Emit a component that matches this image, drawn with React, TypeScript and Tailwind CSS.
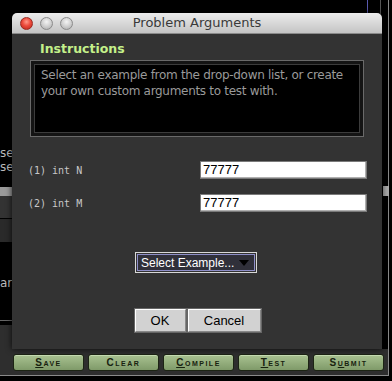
import React from "react";

const sans = { fontFamily: '"DejaVu Sans", "Noto Sans", sans-serif' };
const arial = { fontFamily: '"Liberation Sans", Arial, sans-serif' };
const mono = { fontFamily: '"DejaVu Sans Mono", "Liberation Mono", monospace' };

function Light({ red }: { red?: boolean }) {
  return (
    <div
      className={
        red
          ? "w-[13px] h-[13px] rounded-full border border-[#9a2a22] bg-[radial-gradient(circle_at_50%_35%,#ff9a8a_0%,#ec4b3c_45%,#b8261a_100%)]"
          : "w-[13px] h-[13px] rounded-full border border-[#8a8a8a] bg-[radial-gradient(circle_at_50%_35%,#f4f4f4_0%,#d0d0d0_50%,#a8a8a8_100%)]"
      }
    />
  );
}

function ToolButton({ label, u }: { label: string; u: number }) {
  return (
    <div className="flex-1 h-[17px] rounded-[3px] border border-[#1c2414] bg-[linear-gradient(#a9c291,#7f9a69)] shadow-[inset_0_1px_0_#c7dcb3] flex items-center justify-center">
      <span
        className="text-[10px] font-bold tracking-[1.5px] text-[#18220f] leading-none"
        style={{ ...arial, fontVariant: "small-caps" }}
      >
        {label.split("").map((c, i) => (
          <span key={i} className={i === u ? "underline" : ""}>
            {i === 0 ? c.toUpperCase() : c.toLowerCase()}
          </span>
        ))}
      </span>
    </div>
  );
}

export default function App() {
  return (
    <div className="relative w-[392px] h-[381px] bg-black overflow-hidden" style={sans}>
      {/* background app fragments */}
      <div className="absolute left-[367px] top-0 w-px h-[14px] bg-[#5a5ab0]" />
      <div className="absolute left-[380px] top-0 w-px h-[14px] bg-[#555]" />
      <div className="absolute left-[388px] top-0 w-px h-[376px] bg-[#8a8a8a]" />
      <div className="absolute left-[383px] top-[186px] w-[6px] h-[10px] bg-[#aaa]" />
      <div className="absolute left-0 top-[146px] text-[12px] leading-[14px] text-[#bbb]">
        <div>se</div>
        <div>ser</div>
      </div>
      <div className="absolute left-0 top-[187px] w-[14px] h-[9px] bg-[#9a9a9a]" />
      <div className="absolute left-0 top-[196px] w-[14px] h-[22px] bg-[#333]" />
      <div className="absolute left-0 top-[219px] w-[14px] h-[23px] bg-[#2a2a2a]" />
      <div className="absolute left-0 top-[276px] text-[12px] leading-[14px] text-[#bbb]">are</div>
      <div className="absolute left-0 top-[320px] w-[14px] h-px bg-[#666]" />
      <div className="absolute left-0 top-[325px] w-[14px] h-[24px] bg-[#2e2e2e]" />

      {/* bottom toolbar */}
      <div className="absolute left-0 top-[349px] w-[388px] h-[27px] bg-[#2e2e2e] border-b border-[#8a8a8a] flex items-center gap-[4px] pl-[13px] pr-[4px] pt-[1px]">
        <ToolButton label="Save" u={0} />
        <ToolButton label="Clear" u={-1} />
        <ToolButton label="Compile" u={0} />
        <ToolButton label="Test" u={0} />
        <ToolButton label="Submit" u={1} />
      </div>

      {/* dialog */}
      <div className="absolute left-[12px] top-[13px] w-[370px] h-[336px] flex flex-col rounded-t-[5px] overflow-hidden shadow-[0_0_6px_rgba(0,0,0,0.8)]">
        <div className="h-[21px] bg-[linear-gradient(#ececec,#c4c4c4)] border-b border-[#8a8a8a] flex items-center relative px-[8px] gap-[7px]">
          <Light red />
          <Light />
          <Light />
          <div className="absolute inset-0 flex items-center justify-center text-[13px] text-[#3a3a3a]">
            Problem Arguments
          </div>
        </div>
        <div className="flex-1 bg-[#333333] flex flex-col px-[18px]">
          <div className="pl-[10px] pt-[7px] text-[12.5px] font-bold text-[#c4f08a] leading-[15px]">
            Instructions
          </div>
          <div className="mt-[4px] h-[77px] border border-[#6a6a6a] bg-[#141414] p-[3px]">
            <div className="h-full bg-black border border-[#3c3c3c] px-[6px] pt-[2px] text-[12px] tracking-[-0.3px] leading-[16px] text-[#9a9a9a] whitespace-nowrap">
              Select an example from the drop-down list, or create
              <br />
              your own custom arguments to test with.
            </div>
          </div>
          <div className="mt-[24px] flex items-center justify-between">
            <span className="text-[10px] text-[#c8c8c8] -ml-[2px]" style={mono}>
              (1) int N
            </span>
            <div className="w-[167px] h-[18px] bg-white border border-[#7a7a7a] shadow-[inset_-1px_-1px_0_#b0b0b0] flex items-center px-[2px] text-[13px] text-black -mr-[3px]" style={arial}>
              77777
            </div>
          </div>
          <div className="mt-[15px] flex items-center justify-between">
            <span className="text-[10px] text-[#c8c8c8] -ml-[2px]" style={mono}>
              (2) int M
            </span>
            <div className="w-[167px] h-[18px] bg-white border border-[#7a7a7a] shadow-[inset_-1px_-1px_0_#b0b0b0] flex items-center px-[2px] text-[13px] text-black -mr-[3px]" style={arial}>
              77777
            </div>
          </div>
          <div className="mt-[40px] flex justify-center pr-[2px]">
            <div className="w-[122px] h-[21px] border border-[#d8d8d8] p-px">
              <div className="h-full border border-[#8e8ec8] bg-[#30303a] flex items-center justify-between pl-[3px] pr-[5px] text-[12px] text-white whitespace-nowrap" style={arial}>
                <span>Select Example...</span>
                <svg width="10" height="6" viewBox="0 0 10 6">
                  <path d="M0 0 L10 0 L5 6 Z" fill="#000" />
                </svg>
              </div>
            </div>
          </div>
          <div className="mt-[36px] flex justify-center gap-[2px] pl-[1px]">
            <div className="w-[51px] h-[23px] bg-[#d2d2d2] border border-t-white border-l-white border-b-[#888] border-r-[#888] outline outline-1 outline-[#666] flex items-center justify-center text-[13px] text-black" style={arial}>
              OK
            </div>
            <div className="w-[73px] h-[23px] bg-[#d2d2d2] border border-t-white border-l-white border-b-[#888] border-r-[#888] outline outline-1 outline-[#666] flex items-center justify-center text-[13px] text-black" style={arial}>
              Cancel
            </div>
          </div>
        </div>
      </div>
    </div>
  );
}
